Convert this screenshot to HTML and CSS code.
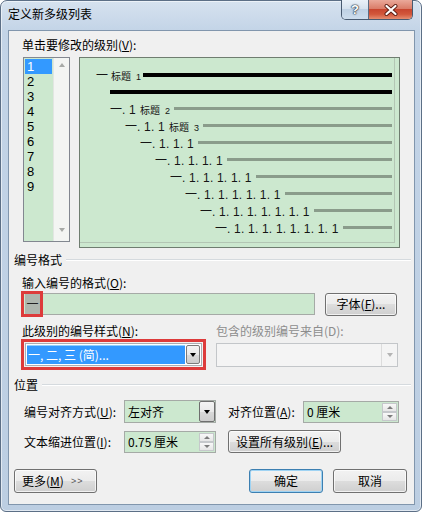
FILE: index.html
```html
<!DOCTYPE html>
<html lang="zh-CN">
<head>
<meta charset="utf-8">
<title>定义新多级列表</title>
<link rel="stylesheet" href="styles.css">
</head>
<body>
<div class="window">
  <div class="titlebar">
    <div class="title">定义新多级列表</div>
    <div class="caption">
      <div class="cap-help">?</div>
      <div class="cap-close">
        <svg width="14" height="12" viewBox="0 0 14 12"><path d="M2.5 2 L11.5 10 M11.5 2 L2.5 10" stroke="#5b1d12" stroke-width="4" stroke-linecap="round"/><path d="M2.5 2 L11.5 10 M11.5 2 L2.5 10" stroke="#ffffff" stroke-width="2.2" stroke-linecap="round"/></svg>
      </div>
    </div>
  </div>
  <div class="client">
    <div class="label ind">单击要修改的级别(<u>V</u>):</div>
    <div class="top-area">
      <div class="listbox">
        <div class="items">
          <div class="item sel">1</div>
          <div class="item">2</div>
          <div class="item">3</div>
          <div class="item">4</div>
          <div class="item">5</div>
          <div class="item">6</div>
          <div class="item">7</div>
          <div class="item">8</div>
          <div class="item">9</div>
        </div>
        <div class="vscroll"><span class="tri up"></span><span class="tri down"></span></div>
      </div>
      <div class="preview">
        <div class="pl l1"><span class="pn">一</span><span class="ph">标题</span><span class="pk">1</span><span class="bar blk"></span></div>
        <div class="pl l2"><span class="bar blk"></span></div>
        <div class="pl l3"><span class="pn">一</span><span class="pd">. 1</span><span class="ph">标题</span><span class="pk">2</span><span class="bar"></span></div>
        <div class="pl l4"><span class="pn">一</span><span class="pd">. 1. 1</span><span class="ph">标题</span><span class="pk">3</span><span class="bar"></span></div>
        <div class="pl l5"><span class="pn">一</span><span class="pd">. 1. 1. 1</span><span class="bar"></span></div>
        <div class="pl l6"><span class="pn">一</span><span class="pd">. 1. 1. 1. 1</span><span class="bar"></span></div>
        <div class="pl l7"><span class="pn">一</span><span class="pd">. 1. 1. 1. 1. 1</span><span class="bar"></span></div>
        <div class="pl l8"><span class="pn">一</span><span class="pd">. 1. 1. 1. 1. 1. 1</span><span class="bar"></span></div>
        <div class="pl l9"><span class="pn">一</span><span class="pd">. 1. 1. 1. 1. 1. 1. 1</span><span class="bar"></span></div>
        <div class="pl l10"><span class="pn">一</span><span class="pd">. 1. 1. 1. 1. 1. 1. 1. 1</span><span class="bar"></span></div>
      </div>
    </div>

    <div class="sect"><span>编号格式</span><span class="rule"></span></div>
    <div class="label ind gap7">输入编号的格式(<u>O</u>):</div>
    <div class="fmt-row">
      <div class="textbox fmt"><span class="hl">一</span><span class="mark mark-fmt"></span></div>
      <div class="btn font-btn">字体(<u>F</u>)...</div>
    </div>
    <div class="style-labels">
      <div>此级别的编号样式(<u>N</u>):</div>
      <div class="disabled">包含的级别编号来自(D):</div>
    </div>
    <div class="style-row">
      <div class="mark-box">
        <div class="combo sel-combo">
          <div class="selfield">一, 二, 三 (简)...</div>
          <div class="ddbtn"><span class="tri-d"></span></div>
        </div>
      </div>
      <div class="combo dis-combo">
        <div class="field"></div>
        <div class="ddplain"><span class="tri-d light"></span></div>
      </div>
    </div>

    <div class="sect sect2"><span>位置</span><span class="rule"></span></div>
    <div class="pos-grid">
      <div class="plabel">编号对齐方式(<u>U</u>):</div>
      <div class="combo green-combo">
        <div class="field">左对齐</div>
        <div class="ddbtn big"><span class="tri-d"></span></div>
      </div>
      <div class="plabel col3">对齐位置(<u>A</u>):</div>
      <div class="spin">
        <div class="field">0 厘米</div>
        <div class="spinbtns"><span class="sb"><span class="tri-u"></span></span><span class="sb"><span class="tri-dn"></span></span></div>
      </div>
      <div class="plabel">文本缩进位置(<u>I</u>):</div>
      <div class="spin">
        <div class="field">0.75 厘米</div>
        <div class="spinbtns"><span class="sb"><span class="tri-u"></span></span><span class="sb"><span class="tri-dn"></span></span></div>
      </div>
      <div class="btn setall">设置所有级别(<u>E</u>)...</div>
    </div>

    <div class="bottom-row">
      <div class="btn more">更多(<u>M</u>)<span class="gg">&gt;&gt;</span></div>
      <div class="btn ok">确定</div>
      <div class="btn cancel">取消</div>
    </div>
  </div>
</div>
</body>
</html>
```

FILE: styles.css
```css
* { box-sizing: border-box; }
html, body { margin: 0; padding: 0; }
body {
  width: 422px;
  height: 512px;
  overflow: hidden;
  background: #ffffff;
  font-family: "Noto Sans CJK SC", "Liberation Sans", sans-serif;
  font-size: 12px;
  color: #000;
}
u { text-decoration: underline; text-underline-offset: 1px; }

.window {
  width: 422px;
  height: 512px;
  border: 1px solid #5c6f86;
  border-radius: 7px 7px 6px 6px;
  padding: 0 6px 6px 7px;
  display: flex;
  flex-direction: column;
  background: linear-gradient(180deg, #d6e2ef 0, #c3d4e7 30px, #bccee2 100%);
  box-shadow: inset 0 0 0 1px rgba(255, 255, 255, 0.55);
}

.titlebar { height: 29px; display: flex; align-items: flex-start; flex: none; }
.title { margin-top: 5px; line-height: 16px; font-size: 12px; color: #000; }
.caption {
  margin-left: auto;
  margin-top: -1px;
  margin-right: 2px;
  display: flex;
  height: 20px;
  border: 1px solid #485a70;
  border-top: none;
  border-radius: 0 0 5px 5px;
  overflow: hidden;
}
.cap-help {
  width: 27px;
  display: flex;
  align-items: center;
  justify-content: center;
  background: linear-gradient(180deg, #eaf1f8 0, #d6e2ee 45%, #bfd1e4 50%, #cddded 100%);
  border-right: 1px solid #5a6c82;
  color: #fff;
  font-family: "Liberation Sans", sans-serif;
  font-weight: bold;
  font-size: 13px;
  text-shadow: 0 0 1px #1e2c3c, 0 0 1px #1e2c3c, 0 0 2px #1e2c3c;
}
.cap-close {
  width: 43px;
  display: flex;
  align-items: center;
  justify-content: center;
  background: linear-gradient(180deg, #eaa99a 0, #da7d69 45%, #c8462f 50%, #d2573b 75%, #e58d70 100%);
}

.client {
  flex: 1;
  background: #f0f0f0;
  border: 1px solid #8196ad;
  padding: 6px 7px 0 5px;
  display: flex;
  flex-direction: column;
}
.label { line-height: 15px; }
.ind { margin-left: 8px; }
.gap7 { margin-top: 7px; }

.top-area { display: flex; align-items: flex-start; margin: 5px 0 0 9px; }
.listbox {
  width: 47px;
  height: 185px;
  border: 1px solid #828790;
  display: flex;
  background: #cce8cf;
}
.items { width: 29px; padding-top: 1px; }
.item {
  height: 15px;
  line-height: 15px;
  margin: 0 1px;
  padding-left: 2px;
  font-family: "Liberation Sans", sans-serif;
  font-size: 13px;
}
.item.sel { background: #3399ff; color: #fff; }
.vscroll {
  width: 16px;
  background: #f3f5f3;
  border-left: 1px solid #e2e6e2;
  display: flex;
  flex-direction: column;
  justify-content: space-between;
  align-items: center;
  padding: 5px 0 9px;
}
.tri { width: 0; height: 0; border-left: 3.5px solid transparent; border-right: 3.5px solid transparent; }
.tri.up { border-bottom: 4px solid #a7aaa7; }
.tri.down { border-top: 4px solid #a7aaa7; }

.preview {
  width: 321px;
  height: 191px;
  margin-left: 9px;
  border: 1px solid #6f7d70;
  background: #cce8cf;
  padding: 8px 7px 0 0;
  box-shadow: inset -4px -4px 0 #cce8cf, inset -5px -5px 0 #b3c6b4;
}
.pl { height: 17px; display: flex; align-items: baseline; color: #151515; white-space: pre; }
.l1 { padding-left: 16px; }
.l2, .l3 { padding-left: 30px; }
.l4 { padding-left: 45px; }
.l5 { padding-left: 60px; }
.l6 { padding-left: 75px; }
.l7 { padding-left: 90px; }
.l8 { padding-left: 105px; }
.l9 { padding-left: 120px; }
.l10 { padding-left: 135px; }
.pn { font-size: 12px; line-height: 17px; width: 12px; flex: none; }
.pd { font-family: "Liberation Sans", sans-serif; font-size: 12px; letter-spacing: 0.2px; line-height: 17px; }
.ph { font-size: 10px; margin-left: 4px; line-height: 17px; }
.l1 .ph { margin-left: 3px; }
.pk { font-family: "Liberation Sans", sans-serif; font-size: 9px; margin-left: 5px; line-height: 17px; }
.bar { flex: 1; height: 3px; background: #8a9c8b; margin-left: 4px; align-self: center; }
.bar.blk { height: 4px; background: #000; }
.l1 .bar { margin-left: 2px; }
.l2 .bar { margin-left: 0; }

.sect { display: flex; align-items: center; margin-top: 4px; line-height: 16px; }
.sect2 { margin-top: 7px; }
.sect .rule {
  flex: 1;
  height: 2px;
  border-top: 1px solid #d5dade;
  border-bottom: 1px solid #ffffff;
  margin-left: 4px;
  margin-right: -4px;
}

.fmt-row { display: flex; align-items: center; height: 26px; margin-top: 1px; margin-left: 8px; }
.textbox {
  position: relative;
  width: 293px;
  height: 22px;
  border: 1px solid #a5aaa6;
  background: #cce8cf;
  display: flex;
  align-items: center;
  padding-left: 2px;
}
.hl {
  width: 15px;
  height: 20px;
  line-height: 20px;
  text-align: center;
  background: #aeb6ae;
  color: #222;
}
.mark {
  position: absolute;
  border: 3px solid #dd3b3b;
}
.mark-fmt { left: -2px; top: -3px; width: 22px; height: 26px; }

.btn {
  height: 23px;
  border: 1px solid #707070;
  border-radius: 3px;
  background: linear-gradient(180deg, #f2f2f2 0%, #ebebeb 50%, #dddddd 50%, #cfcfcf 100%);
  box-shadow: inset 0 0 0 1px rgba(255, 255, 255, 0.7);
  display: flex;
  align-items: center;
  justify-content: center;
  line-height: 16px;
  white-space: nowrap;
}
.font-btn { width: 72px; margin-left: 10px; }

.style-labels {
  display: grid;
  grid-template-columns: 194px 1fr;
  margin: 6px 0 0 8px;
  line-height: 16px;
}
.disabled { color: #8d8d8d; }

.style-row { display: flex; align-items: center; height: 31px; margin-left: 7px; }
.mark-box {
  width: 185px;
  height: 31px;
  border: 3px solid #dd3b3b;
  padding: 1px;
}
.combo { display: flex; height: 23px; border: 1px solid #abadb3; }
.sel-combo { height: 23px; background: #ffffff; }
.selfield {
  flex: 1;
  background: #3399ff;
  color: #fff;
  margin: 1px;
  padding-left: 1px;
  line-height: 19px;
  box-shadow: inset 0 1px 0 #8fd0ff;
}
.ddbtn {
  width: 14px;
  margin: 1px 1px 1px 0;
  border: 1px solid #7b7b7b;
  border-radius: 2px;
  background: linear-gradient(180deg, #f4f4f4 0%, #e9e9e9 50%, #d9d9d9 51%, #cdcdcd 100%);
  display: flex;
  align-items: center;
  justify-content: center;
}
.ddbtn.big { width: 16px; margin: 0; border-color: #6e6e6e; }
.tri-d { width: 0; height: 0; border-left: 3.5px solid transparent; border-right: 3.5px solid transparent; border-top: 4px solid #000; }
.tri-d.light { border-top-color: #b4b4b4; }
.dis-combo {
  width: 182px;
  height: 24px;
  margin-left: 10px;
  border-color: #c3c6c9;
  background: #f4f4f4;
}
.dis-combo .field { flex: 1; }
.ddplain {
  width: 16px;
  border-left: 1px solid #dcdcdc;
  display: flex;
  align-items: center;
  justify-content: center;
}

.pos-grid {
  display: grid;
  grid-template-columns: 100px 92px 87px 96px;
  grid-template-rows: 23px 23px;
  row-gap: 7px;
  margin: 7px 0 0 10px;
  align-items: center;
}
.plabel { line-height: 16px; }
.col3 { padding-left: 12px; }
.green-combo { height: 23px; background: #cce8cf; border-color: #a5aaa6; }
.field { flex: 1; padding-left: 3px; line-height: 21px; }
.spin {
  height: 22px;
  border: 1px solid #a5aaa6;
  background: #cce8cf;
  display: flex;
}
.spin .field { line-height: 20px; }
.spinbtns { width: 15px; display: flex; flex-direction: column; margin: 1px 1px 1px 0; }
.sb {
  flex: 1;
  border: 1px solid #c5c8cb;
  background: linear-gradient(180deg, #f8f8f8, #e6e6e6);
  display: flex;
  align-items: center;
  justify-content: center;
}
.tri-u { width: 0; height: 0; border-left: 3px solid transparent; border-right: 3px solid transparent; border-bottom: 3px solid #7c7c7c; }
.tri-dn { width: 0; height: 0; border-left: 3px solid transparent; border-right: 3px solid transparent; border-top: 3px solid #7c7c7c; }
.setall { grid-column: 3 / 5; justify-self: start; width: 113px; margin-left: 12px; }

.bottom-row { display: flex; margin-top: 16px; height: 24px; }
.bottom-row .btn { height: 24px; }
.more { width: 83px; justify-content: flex-start; padding-left: 7px; }
.gg { font-family: "Liberation Sans", sans-serif; font-size: 9px; color: #555; margin-left: 7px; letter-spacing: 1px; }
.ok {
  width: 74px;
  margin-left: auto;
  border-color: #3c7fb1;
  box-shadow: inset 0 0 0 1px #9fd3f3;
}
.cancel { width: 74px; margin-left: 10px; }
```
